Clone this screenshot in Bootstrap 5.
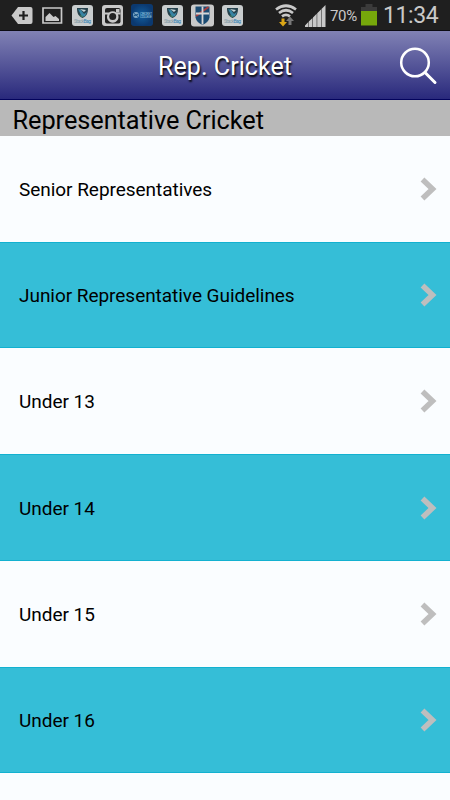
<!DOCTYPE html>
<html lang="en">
<head>
<meta charset="utf-8">
<meta name="viewport" content="width=device-width, initial-scale=1">
<title>Rep. Cricket</title>
<link href="https://cdn.jsdelivr.net/npm/bootstrap@5.3.0/dist/css/bootstrap.min.css" rel="stylesheet">
<style>
body{font-family:Roboto,sans-serif;color:#000;background:#fafdff;height:800px;line-height:1}
.status{height:30px;background:#1f1f1f;color:#c9c9c9;padding-left:11px;padding-right:13px}
.status svg{display:block;flex:none}
.notices{gap:9px}
.tight{margin-left:-1px}
.pct{font-size:15px;letter-spacing:-.35px;width:27px;margin-left:4px;padding-top:2px}
.clock{font-size:23px;letter-spacing:-.4px;width:54px;margin-left:6px;padding-top:1px}
.titlebar{height:70px;border-top:1px solid #0c0c14;border-bottom:1px solid #03035c;background:linear-gradient(#8182b5,#29297c);padding:3px 0 0}
.titlebar h1{font-size:25px;color:#fff;text-shadow:1px 2px 2px #000;line-height:30px;letter-spacing:.05px}
.find{right:12px;top:14px}
.section-head{height:35.5px;background:#b9b9b9;font-size:25.3px;line-height:42px;padding-left:12.5px;font-weight:400;letter-spacing:-.04px}
.menu-row{height:106.3px;padding:0 11px 0 19px;background:#fafdff;color:#000;font-size:19px;letter-spacing:-.04px;border:0}
.menu-row span{padding-top:1px}
.menu-row:nth-child(even){background:#35bed7;border-top:1px solid #12b1d0;border-bottom:1px solid #12b1d0}
.menu-row:last-child{height:27px}
</style>
<script src="https://cdn.jsdelivr.net/npm/bootstrap@5.3.0/dist/js/bootstrap.bundle.min.js"></script>
</head>
<body class="overflow-hidden">
<svg width="0" height="0" class="position-absolute">
<defs>
<g id="bag"><rect width="21" height="21" rx="3" fill="#c9cdce"/><path d="M5 3h11c0 5-1 8-5.500 10C6 11 5 8 5 3z" fill="#26424d"/><path d="M6 4l3 1 3 4 3-2-2 4-3 1z" fill="#3785a4"/><path d="M8 4l6 1-2 2z" fill="#c5d8dc"/><path d="M7 10l4 1-1 1z" fill="#43855a"/><text x="2" y="18" font-size="5" textLength="17" fill="#8299a5">Stack<tspan fill="#2b80b5">Bag</tspan></text></g>
<path id="chev" d="M2.500 2.500 12.500 12 2.500 21.500" fill="none" stroke="#bebebe" stroke-width="5.500"/>
</defs>
</svg>
<header class="status d-flex align-items-center justify-content-between">
<div class="notices d-flex align-items-center">
<svg width="22" height="21"><path d="M.5 10.500 7 2h12.500Q21.500 2 21.500 4v13q0 2-2 2H7z" fill="#c9c9c9"/><path d="M12.500 6v9M8 10.500h9" stroke="#1f1f1f" stroke-width="2.200"/></svg>
<svg width="21" height="21"><path d="M1 3h18.500v15H1z" fill="none" stroke="#c9c9c9" stroke-width="1.700"/><path d="M3.500 16v-4l4-4 4 4 2-1 3.500 3v2z" fill="#c9c9c9"/></svg>
<svg width="21" height="21"><use href="#bag"/></svg>
<svg width="21" height="21"><rect width="21" height="21" rx="3" fill="#c9c9c9"/><path d="M5 3h11.500q2 0 2 2v11.500q0 2-2 2H5q-2 0-2-2V5q0-2 2-2z" fill="#222"/><path d="M3 7.500h4q3.700-2.500 7.500 0h4v2h-2.500a5.800 5.800 0 1 1-10.500 0H3z" fill="#c9c9c9"/><circle cx="10.700" cy="11.500" r="3.500" fill="#222"/><rect x="14" y="4" width="3.500" height="3.500" fill="#c9c9c9"/></svg>
<svg class="tight" width="22" height="22"><defs><radialGradient id="rg"><stop stop-color="#125f9f"/><stop offset="1" stop-color="#0b3970"/></radialGradient></defs><rect width="22" height="22" rx="3" fill="url(#rg)"/><circle cx="5" cy="11" r="3" fill="#7fa8c5"/><path d="M2.500 12l5-2M3 9.500l4 3" stroke="#145084"/><text x="9" y="10.500" font-size="3.500" textLength="12" fill="#9cc7df">CRICKET</text><text x="9" y="14" font-size="3.500" textLength="12" fill="#9cc7df">COLLEGE</text></svg>
<svg width="21" height="21"><use href="#bag"/></svg>
<svg class="tight" width="23" height="23"><rect y=".5" width="23" height="22" rx="3" fill="#c9c9c9"/><path d="M4.500 2.500h14v11q-1 5-7 7.500-6-2.500-7-7.500z" fill="#1b4b72"/><path d="M5 12 17.500 3" stroke="#aa3e3e" stroke-width="2"/><path d="M11.500 2.500v18M5 9.500h13" stroke="#d5d5d5" stroke-width="1.800"/></svg>
<svg class="tight" width="21" height="21"><use href="#bag"/></svg>
</div>
<div class="d-flex align-items-center">
<svg width="22" height="24"><g fill="none" stroke="#c9c9c9" stroke-width="2.700"><path d="M1 6.500q10-7.500 20 0"/><path d="M4 10q7-5.500 14 0"/><path d="M7 13.300q4-3 8 0"/></g><path d="M6.500 15.500h3V19H12l-4 4.500L4 19h2.500z" fill="#dba617"/><path d="M13.500 22v-4H11l4-4.500 4 4.500h-2.500v4z" fill="#777"/></svg>
<svg width="21" height="24" class="ms-2"><path d="M0 24v-1.500L3.300 19v5zm3.800 0v-5.500L7.500 15v9zM8 24v-9.500l3.700-3.700V24zm4.200 0V10.300L16 6.500V24zm4.300 0V6L20.500 2v22z" fill="#c9c9c9"/></svg>
<span class="pct">70%</span>
<svg width="16" height="22" class="ms-1"><path d="M0 3h4.500V0h7v3H16v4H0z" fill="#3b3b3b"/><path d="M0 7h16v14.500H0z" fill="#76a70b"/></svg>
<span class="clock text-nowrap">11:34</span>
</div>
</header>
<nav class="titlebar navbar position-relative justify-content-center">
<h1 class="m-0 fw-normal">Rep. Cricket</h1>
<svg class="find position-absolute" width="40" height="40" fill="none" stroke="#fff"><circle cx="17" cy="17.500" r="13.800" stroke-width="2.500"/><path d="m27 27.500 10 10" stroke-width="3" stroke-linecap="round"/></svg>
</nav>
<h2 class="section-head m-0">Representative Cricket</h2>
<main class="list-group list-group-flush">
<a class="menu-row list-group-item d-flex align-items-center justify-content-between"><span>Senior Representatives</span><svg width="19" height="24"><use href="#chev"/></svg></a>
<a class="menu-row list-group-item d-flex align-items-center justify-content-between"><span>Junior Representative Guidelines</span><svg width="19" height="24"><use href="#chev"/></svg></a>
<a class="menu-row list-group-item d-flex align-items-center justify-content-between"><span>Under 13</span><svg width="19" height="24"><use href="#chev"/></svg></a>
<a class="menu-row list-group-item d-flex align-items-center justify-content-between"><span>Under 14</span><svg width="19" height="24"><use href="#chev"/></svg></a>
<a class="menu-row list-group-item d-flex align-items-center justify-content-between"><span>Under 15</span><svg width="19" height="24"><use href="#chev"/></svg></a>
<a class="menu-row list-group-item d-flex align-items-center justify-content-between"><span>Under 16</span><svg width="19" height="24"><use href="#chev"/></svg></a>
<div class="menu-row list-group-item"></div>
</main>
</body>
</html>
